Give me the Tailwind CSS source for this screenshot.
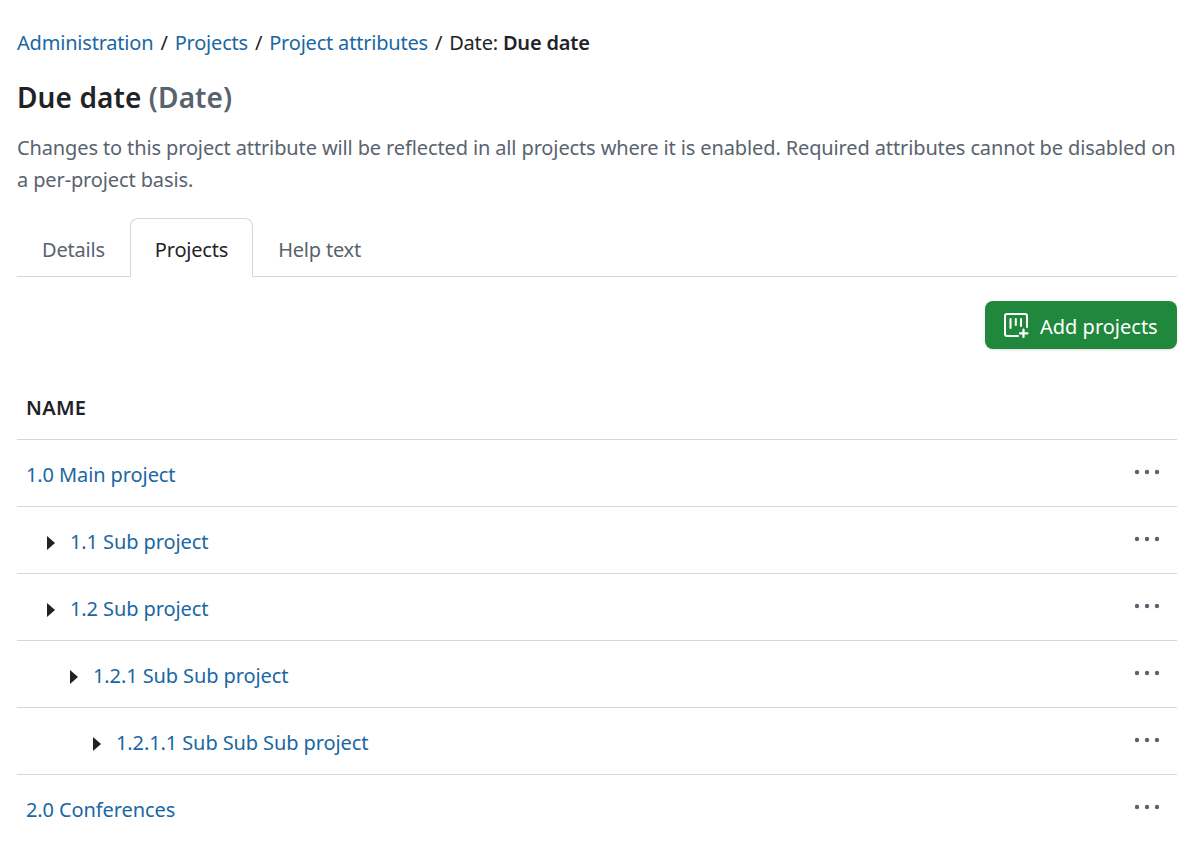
<!DOCTYPE html>
<html lang="en">
<head>
  <meta charset="UTF-8" />
  <title>Due date - Project attributes</title>
  <script src="https://cdn.jsdelivr.net/npm/@tailwindcss/browser@4"></script>
</head>
<body class="bg-white text-[#1f2328] font-['Noto_Sans',sans-serif] text-[20px] overflow-hidden h-[844px]">
  <div class="px-[17px] pr-[21px] pt-[28px]">
    <!-- Breadcrumb -->
    <nav class="flex items-center h-[30px] tracking-[-0.2px] text-[#1a67a3]">
      <a>Administration</a><span class="mx-[7px] text-[#1f2328]">/</span>
      <a>Projects</a><span class="mx-[7px] text-[#1f2328]">/</span>
      <a>Project attributes</a><span class="mx-[7px] text-[#1f2328]">/</span>
      <span class="text-[#1f2328]">Date: <b class="font-semibold">Due date</b></span>
    </nav>

    <!-- Title -->
    <h1 class="mt-[21px] h-[36px] leading-[36px] text-[28px] font-semibold tracking-[0.1px] text-[#1f2328]">Due date <span class="text-[#59636e]">(Date)</span></h1>
    <p class="mt-[17px] text-[#59636e] leading-[32px] tracking-[-0.125px]">Changes to this project attribute will be reflected in all projects where it is enabled. Required attributes cannot be disabled on a per-project basis.</p>

    <!-- Tabs -->
    <div class="mt-[22px] flex h-[59px] border-b border-[#d1d9e0] items-end tracking-[-0.2px]">
      <div class="h-[58px] px-[25px] pt-[6px] flex items-center text-[#59636e]">Details</div>
      <div class="h-[59px] -mb-px px-[24px] pt-[4px] flex items-center bg-white border border-b-0 border-[#d1d9e0] rounded-t-[8px]">Projects</div>
      <div class="h-[58px] px-[25px] pt-[6px] flex items-center text-[#59636e]">Help text</div>
    </div>

    <!-- Toolbar -->
    <div class="flex justify-end mt-[24px]">
      <button class="h-[48px] w-[192px] pl-[18px] flex items-center gap-[10px] rounded-[8px] bg-[#1f883d] text-white shadow-sm">
        <svg width="27" height="27" viewBox="0 0 27 27" fill="none" stroke="white" stroke-width="2" stroke-linecap="round">
          <path d="M15 24H4a2 2 0 0 1-2-2V4a2 2 0 0 1 2-2h18a2 2 0 0 1 2 2v11"/>
          <path d="M7.500 7v9M12.800 7v6M18 7v7"/>
          <path d="M20.500 17.500v7.500M17 21.300h7.500" stroke-width="2.200"/>
        </svg>
        <span class="pt-[4px]">Add projects</span>
      </button>
    </div>

    <!-- Table -->
    <div class="mt-[24px] tracking-[-0.1px]">
      <div class="h-[67px] border-b border-[#d1d9e0] flex items-center px-[9px] font-semibold tracking-[0.3px] pt-[4px]">NAME</div>

      <div class="h-[67px] border-b border-[#d1d9e0] flex items-center justify-between pl-[9px] pr-[17px] pt-[4px]">
        <a class="text-[#1a67a3]">1.0 Main project</a>
        <svg width="26" height="6" viewBox="0 0 26 6" fill="#59636e" class="-mt-[6px]"><circle cx="3" cy="3" r="2.200"/><circle cx="13" cy="3" r="2.200"/><circle cx="23" cy="3" r="2.200"/></svg>
      </div>

      <div class="h-[67px] border-b border-[#d1d9e0] flex items-center justify-between pl-[30px] pr-[17px] pt-[4px]">
        <div class="flex items-center gap-[15px]">
          <svg width="8" height="14" viewBox="0 0 8 14" fill="#1f2328" class="mt-[2px]"><path d="M0 0l8 7-8 7z"/></svg>
          <a class="text-[#1a67a3]">1.1 Sub project</a>
        </div>
        <svg width="26" height="6" viewBox="0 0 26 6" fill="#59636e" class="-mt-[6px]"><circle cx="3" cy="3" r="2.200"/><circle cx="13" cy="3" r="2.200"/><circle cx="23" cy="3" r="2.200"/></svg>
      </div>

      <div class="h-[67px] border-b border-[#d1d9e0] flex items-center justify-between pl-[30px] pr-[17px] pt-[4px]">
        <div class="flex items-center gap-[15px]">
          <svg width="8" height="14" viewBox="0 0 8 14" fill="#1f2328" class="mt-[2px]"><path d="M0 0l8 7-8 7z"/></svg>
          <a class="text-[#1a67a3]">1.2 Sub project</a>
        </div>
        <svg width="26" height="6" viewBox="0 0 26 6" fill="#59636e" class="-mt-[6px]"><circle cx="3" cy="3" r="2.200"/><circle cx="13" cy="3" r="2.200"/><circle cx="23" cy="3" r="2.200"/></svg>
      </div>

      <div class="h-[67px] border-b border-[#d1d9e0] flex items-center justify-between pl-[53px] pr-[17px] pt-[4px]">
        <div class="flex items-center gap-[15px]">
          <svg width="8" height="14" viewBox="0 0 8 14" fill="#1f2328" class="mt-[2px]"><path d="M0 0l8 7-8 7z"/></svg>
          <a class="text-[#1a67a3]">1.2.1 Sub Sub project</a>
        </div>
        <svg width="26" height="6" viewBox="0 0 26 6" fill="#59636e" class="-mt-[6px]"><circle cx="3" cy="3" r="2.200"/><circle cx="13" cy="3" r="2.200"/><circle cx="23" cy="3" r="2.200"/></svg>
      </div>

      <div class="h-[67px] border-b border-[#d1d9e0] flex items-center justify-between pl-[76px] pr-[17px] pt-[4px]">
        <div class="flex items-center gap-[15px]">
          <svg width="8" height="14" viewBox="0 0 8 14" fill="#1f2328" class="mt-[2px]"><path d="M0 0l8 7-8 7z"/></svg>
          <a class="text-[#1a67a3]">1.2.1.1 Sub Sub Sub project</a>
        </div>
        <svg width="26" height="6" viewBox="0 0 26 6" fill="#59636e" class="-mt-[6px]"><circle cx="3" cy="3" r="2.200"/><circle cx="13" cy="3" r="2.200"/><circle cx="23" cy="3" r="2.200"/></svg>
      </div>

      <div class="h-[66px] flex items-center justify-between pl-[9px] pr-[17px] pt-[4px]">
        <a class="text-[#1a67a3]">2.0 Conferences</a>
        <svg width="26" height="6" viewBox="0 0 26 6" fill="#59636e" class="-mt-[6px]"><circle cx="3" cy="3" r="2.200"/><circle cx="13" cy="3" r="2.200"/><circle cx="23" cy="3" r="2.200"/></svg>
      </div>
    </div>
  </div>
</body>
</html>
